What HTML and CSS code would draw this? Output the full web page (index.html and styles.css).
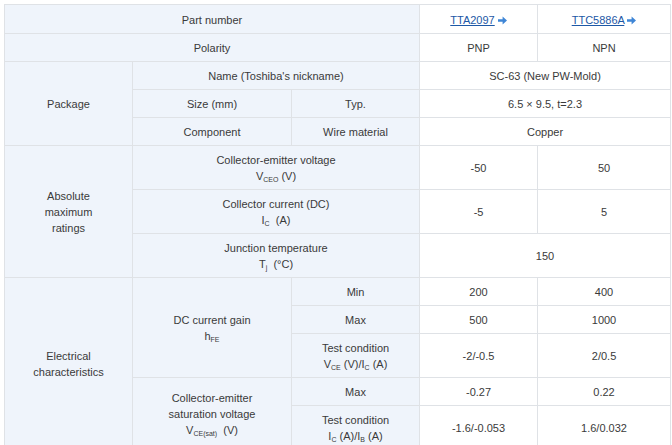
FILE: index.html
```html
<!DOCTYPE html>
<html>
<head>
<meta charset="utf-8">
<link rel="stylesheet" href="styles.css">
</head>
<body>
<table class="spec">
  <colgroup>
    <col class="c1"><col class="c2"><col class="c3"><col class="c4"><col class="c5">
  </colgroup>
  <tr class="first">
    <th colspan="3">Part number</th>
    <td><a class="lnk" href="#">TTA2097</a> <svg class="arr" viewBox="0 0 9 9" width="9" height="9"><path d="M0 3.3h4.6V0.6L9 4.5 4.6 8.4V5.7H0z"/></svg></td>
    <td><a class="lnk" href="#">TTC5886A</a> <svg class="arr" viewBox="0 0 9 9" width="9" height="9"><path d="M0 3.3h4.6V0.6L9 4.5 4.6 8.4V5.7H0z"/></svg></td>
  </tr>
  <tr>
    <th colspan="3">Polarity</th>
    <td>PNP</td>
    <td>NPN</td>
  </tr>
  <tr>
    <th rowspan="3">Package</th>
    <th colspan="2">Name (Toshiba's nickname)</th>
    <td colspan="2">SC-63 (New PW-Mold)</td>
  </tr>
  <tr>
    <th>Size (mm)</th>
    <th>Typ.</th>
    <td colspan="2">6.5 × 9.5, t=2.3</td>
  </tr>
  <tr>
    <th>Component</th>
    <th>Wire material</th>
    <td colspan="2">Copper</td>
  </tr>
  <tr>
    <th rowspan="3">Absolute<br>maximum<br>ratings</th>
    <th colspan="2">Collector-emitter voltage<br>V<sub>CEO</sub> (V)</th>
    <td>-50</td>
    <td>50</td>
  </tr>
  <tr>
    <th colspan="2">Collector current (DC)<br>I<sub>C</sub>&nbsp; (A)</th>
    <td>-5</td>
    <td>5</td>
  </tr>
  <tr>
    <th colspan="2">Junction temperature<br>T<sub>j</sub>&nbsp; (°C)</th>
    <td colspan="2">150</td>
  </tr>
  <tr>
    <th rowspan="5">Electrical<br>characteristics</th>
    <th rowspan="3">DC current gain<br>h<sub>FE</sub></th>
    <th>Min</th>
    <td>200</td>
    <td>400</td>
  </tr>
  <tr>
    <th>Max</th>
    <td>500</td>
    <td>1000</td>
  </tr>
  <tr>
    <th>Test condition<br>V<sub>CE</sub> (V)/I<sub>C</sub> (A)</th>
    <td>-2/-0.5</td>
    <td>2/0.5</td>
  </tr>
  <tr>
    <th rowspan="2">Collector-emitter<br>saturation voltage<br>V<sub>CE(sat)</sub>&nbsp; (V)</th>
    <th>Max</th>
    <td>-0.27</td>
    <td>0.22</td>
  </tr>
  <tr>
    <th>Test condition<br>I<sub>C</sub> (A)/I<sub>B</sub> (A)</th>
    <td>-1.6/-0.053</td>
    <td>1.6/0.032</td>
  </tr>
</table>
</body>
</html>
```

FILE: styles.css
```css
html, body {
  margin: 0;
  padding: 0;
  background: #ffffff;
}

body {
  padding: 4px 0 0 4px;
  font-family: "Liberation Sans", Arial, sans-serif;
  font-size: 11px;
  color: #3a3a3a;
}

.spec {
  border-collapse: collapse;
  table-layout: fixed;
  width: 666px;
}

.c1 { width: 128px; }
.c2 { width: 159px; }
.c3 { width: 128px; }
.c4 { width: 118px; }
.c5 { width: 133px; }

.spec th,
.spec td {
  border: 1px solid #dfe2e6;
  padding: 6px 4px 5px;
  line-height: 16px;
  text-align: center;
  vertical-align: middle;
  font-weight: normal;
}

.spec .first th,
.spec .first td {
  padding-top: 7px;
}

.spec th {
  background: #eff4fb;
}

.spec td {
  background: #ffffff;
}

.spec sub {
  font-size: 7px;
  line-height: 0;
  vertical-align: -2px;
}

.lnk {
  color: #1d58a6;
  text-decoration: underline;
}

.arr {
  fill: #3f86d6;
  vertical-align: -0.5px;
}
```
